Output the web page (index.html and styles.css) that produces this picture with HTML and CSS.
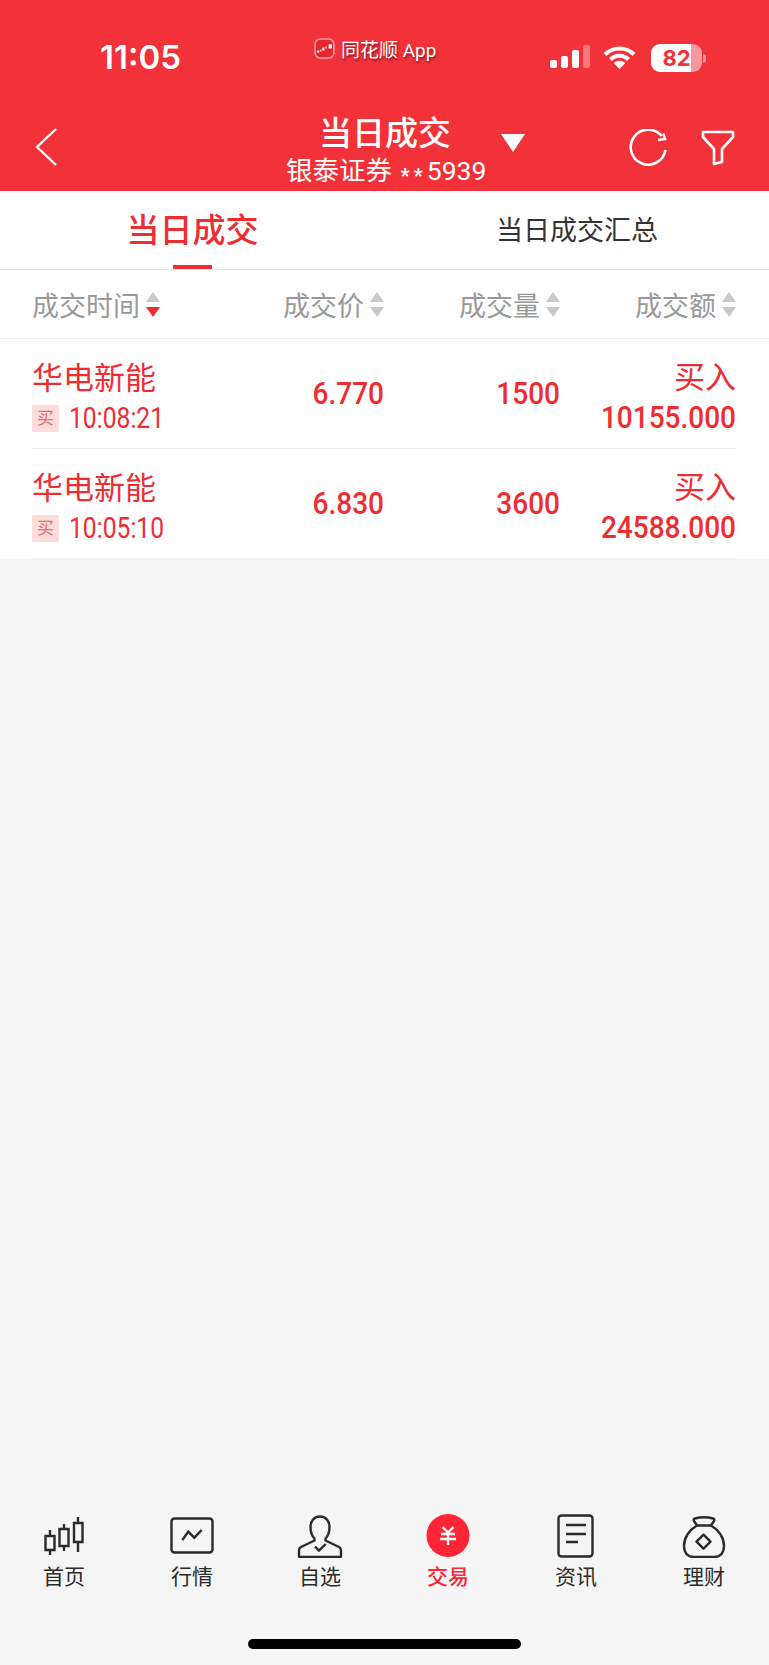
FILE: index.html
```html
<!DOCTYPE html>
<html>
  <head>
    <meta charset="utf-8" />
    <link rel="stylesheet" href="styles.css">
  </head>

  <body>
    <header class="header">
      <div class="status">
        <div class="clock">11:05</div>
        <div class="source">
          <svg class="source-logo" width="21" height="21" viewBox="0 0 20 20">
            <rect x="1" y="1" width="18" height="18" rx="5" fill="#e8242c" stroke="#f9a0a4" stroke-width="1.5"/>
            <path d="M3 12h2v2H3zM6 11h1v2H6zM8 9h2v3H8zM11 8h1v2h-1zM14 6h3v4h-3z" fill="#fff"/>
          </svg>
          <span>同花顺 App</span>
        </div>
        <div class="indicators">
          <div class="signal">
            <i class="bar bar-1"></i><i class="bar bar-2"></i><i class="bar bar-3"></i><i class="bar bar-4"></i>
          </div>
          <svg class="wifi" width="33" height="24" viewBox="0 0 33 24">
            <path d="M2 9.5C10 1.5 23 1.5 31 9.5M7.5 14.5C12.5 9.5 20.5 9.5 25.5 14.5" fill="none" stroke="#fff" stroke-width="4.2"/>
            <path d="M10.8 18.2C14 15 19 15 22.2 18.2L16.5 24Z" fill="#fff"/>
          </svg>
          <div class="battery">82</div>
          <i class="battery-nub"></i>
        </div>
      </div>

      <nav class="nav">
        <div class="nav-back">
          <svg width="24" height="40" viewBox="0 0 24 40">
            <path d="M22 2L3 20L22 38" fill="none" stroke="#fff" stroke-width="2.4"/>
          </svg>
        </div>
        <div class="nav-title">
          <div class="nav-name">当日成交</div>
          <div class="nav-account">银泰证券 <span class="mask">**</span><span class="tail">5939</span></div>
        </div>
        <div class="nav-actions">
          <i class="nav-caret"></i>
          <svg class="nav-reload" width="40" height="40" viewBox="0 0 40 40">
            <path d="M32.7 7A17.5 17.5 0 1 0 36.5 21" fill="none" stroke="#fff" stroke-width="2.6"/>
            <path d="M34.3 4.5L36 10L29 11" fill="none" stroke="#fff" stroke-width="2.4"/>
          </svg>
          <svg class="nav-filter" width="36" height="38" viewBox="0 0 36 38">
            <path d="M2 3H32V8L21 20V33L13 35V20L2 8Z" fill="none" stroke="#fff" stroke-width="2.6" stroke-linejoin="round"/>
          </svg>
        </div>
      </nav>
    </header>

    <div class="tabs">
      <div class="tab tab-active">当日成交</div>
      <div class="tab">当日成交汇总</div>
    </div>

    <div class="table-head">
      <div class="th th-first">成交时间<span class="sort"><i class="up"></i><i class="down down-on"></i></span></div>
      <div class="th">成交价<span class="sort"><i class="up"></i><i class="down"></i></span></div>
      <div class="th">成交量<span class="sort"><i class="up"></i><i class="down"></i></span></div>
      <div class="th">成交额<span class="sort"><i class="up"></i><i class="down"></i></span></div>
    </div>

    <div class="table-body">
      <div class="row">
        <div class="cell-stock">
          <div class="stock-name">华电新能</div>
          <div class="stock-time"><span class="tag">买</span><span class="time">10:08:21</span></div>
        </div>
        <div class="num">6.770</div>
        <div class="num">1500</div>
        <div class="cell-amount">
          <div class="direction">买入</div>
          <div class="num">10155.000</div>
        </div>
      </div>
      <div class="row">
        <div class="cell-stock">
          <div class="stock-name">华电新能</div>
          <div class="stock-time"><span class="tag">买</span><span class="time">10:05:10</span></div>
        </div>
        <div class="num">6.830</div>
        <div class="num">3600</div>
        <div class="cell-amount">
          <div class="direction">买入</div>
          <div class="num">24588.000</div>
        </div>
      </div>
    </div>

    <main class="blank"></main>

    <footer class="footer">
      <div class="tabbar">
        <div class="tabbar-item">
          <svg width="48" height="44" viewBox="0 0 48 44" fill="none" stroke="#2b2b2b" stroke-width="2.4">
            <path d="M5.5 22h9v14h-9zM10 16v6M10 36v5M19.5 15h9v17h-9zM24 10v5M24 32v5M34 9h8.5v19H34zM38 3v6M38 28v10"/>
          </svg>
          <span>首页</span>
        </div>
        <div class="tabbar-item">
          <svg width="48" height="44" viewBox="0 0 48 44" fill="none" stroke="#2b2b2b" stroke-width="2.4">
            <rect x="3.5" y="4.5" width="41" height="34" rx="3"/>
            <path d="M14.3 26L20.3 17.7L26.3 23.7L33.7 16"/>
          </svg>
          <span>行情</span>
        </div>
        <div class="tabbar-item">
          <svg width="48" height="44" viewBox="0 0 48 44" fill="none" stroke="#2b2b2b" stroke-width="2.4" stroke-linejoin="round">
            <path d="M18.5 24.5C15.5 21.5 14.5 18 14.5 13C14.5 6.5 18.5 2.5 24 2.5C29.5 2.5 33.5 6.5 33.5 13C33.5 18 32.5 21.5 29.5 24.5V26.5L43 33Q45 34 45 37V42Q45 43 44 43H4Q3 43 3 42V37Q3 34 5 33L18.5 26.5Z"/>
            <path d="M19 32.7L23 36.7L29.7 30"/>
          </svg>
          <span>自选</span>
        </div>
        <div class="tabbar-item tabbar-active">
          <svg width="48" height="44" viewBox="0 0 48 44" fill="none">
            <circle cx="24" cy="21.5" r="21.5" fill="#ff2436"/>
            <path d="M18.5 13L24 18.5L29.5 13M17 20H31M16 25H32M24 18.5V31" stroke="#fff" stroke-width="2.4"/>
          </svg>
          <span>交易</span>
        </div>
        <div class="tabbar-item">
          <svg width="48" height="44" viewBox="0 0 48 44" fill="none" stroke="#2b2b2b" stroke-width="2.4">
            <rect x="6.5" y="1.5" width="34" height="41" rx="3"/>
            <path d="M14 11H34M14 20H34M14 28H26"/>
          </svg>
          <span>资讯</span>
        </div>
        <div class="tabbar-item">
          <svg width="48" height="44" viewBox="0 0 48 44" fill="none" stroke="#2b2b2b" stroke-width="2.4" stroke-linejoin="round">
            <path d="M15 4.5Q24 2 33 4.5Q35 5 34 7L31 11.5H17L14 7Q13 5 15 4.5Z"/>
            <path d="M17 11.5C9 16 4 24 4 32C4 40 9 43 14 43H34C39 43 44 40 44 32C44 24 39 16 31 11.5"/>
            <path d="M23.5 20.7L30.5 27.7L23.5 34.7L16.5 27.7Z"/>
          </svg>
          <span>理财</span>
        </div>
      </div>
      <div class="home-bar"></div>
    </footer>
  </body>
</html>
```

FILE: styles.css
```css
html,
body {
  margin: 0;
  padding: 0;
}

body {
  display: flex;
  flex-direction: column;
  width: 769px;
  height: 1665px;
  overflow: hidden;
  background: #f5f5f5;
  font-family: "Roboto", "Noto Sans CJK SC", sans-serif;
}

i {
  display: block;
}

.header {
  height: 191px;
  background: #f23139;
  color: #fff;
}

.status {
  display: grid;
  grid-template-columns: 314px auto 1fr;
  height: 100px;
}
.clock {
  padding: 37px 0 0 100px;
  font-family: "Inter", sans-serif;
  font-size: 33px;
  line-height: 40px;
  font-weight: 600;
}
.source {
  display: flex;
  align-items: center;
  gap: 6px;
  height: 20px;
  margin-top: 38px;
  font-size: 19px;
  text-shadow: 1px 2px 2px rgba(90, 0, 0, 0.6);
}
.indicators {
  display: flex;
  align-items: flex-start;
  justify-content: flex-end;
  padding: 45px 63px 0 0;
}
.signal {
  display: flex;
  align-items: flex-end;
  gap: 4px;
  height: 23px;
}
.bar {
  width: 7px;
  border-radius: 2px;
  background: #fff;
}
.bar-1 {
  height: 8px;
}
.bar-2 {
  height: 12px;
}
.bar-3 {
  height: 18px;
}
.bar-4 {
  height: 23px;
  background: rgba(255, 255, 255, 0.35);
}
.wifi {
  margin-left: 13px;
}
.battery {
  width: 51px;
  height: 28px;
  margin: -1px 0 0 15px;
  border-radius: 9px;
  background: linear-gradient(to right, #fff 78%, rgba(255, 255, 255, 0.5) 78%);
  color: #f23139;
  font-family: "Inter", sans-serif;
  font-size: 22px;
  line-height: 28px;
  font-weight: 700;
  text-align: center;
}
.battery-nub {
  width: 3px;
  height: 9px;
  margin: 9px 0 0 1px;
  border-radius: 0 3px 3px 0;
  background: rgba(255, 255, 255, 0.5);
}

.nav {
  display: grid;
  grid-template-columns: 286px 198px 1fr;
  height: 91px;
}
.nav-back {
  padding: 27px 0 0 34px;
}
.nav-title {
  text-align: center;
}
.nav-name {
  padding-top: 15px;
  font-size: 33px;
  line-height: 38px;
  font-weight: 500;
}
.nav-account {
  margin-top: 2px;
  font-size: 26.5px;
  line-height: 32px;
  white-space: nowrap;
}
.mask {
  margin-left: 2px;
  font-size: 20px;
  font-weight: 700;
  letter-spacing: 4px;
  vertical-align: -3px;
}
.nav-actions {
  display: flex;
  align-items: flex-start;
  padding: 29px 0 0 17px;
}
.nav-caret {
  width: 0;
  height: 0;
  margin-top: 5px;
  border-left: 12px solid transparent;
  border-right: 12px solid transparent;
  border-top: 18px solid #fff;
}
.nav-reload {
  margin-left: 104px;
}
.nav-filter {
  margin-left: 32px;
}

.tabs {
  display: grid;
  grid-template-columns: 385px 384px;
  grid-template-rows: 78px;
  height: 78px;
  border-bottom: 1px solid #e6e6e6;
  background: #fff;
}
.tab {
  position: relative;
  text-align: center;
  font-size: 27px;
  line-height: 80px;
  color: #333;
}
.tab-active {
  font-size: 33px;
  font-weight: 500;
  color: #ee2d33;
}
.tab-active::after {
  content: "";
  position: absolute;
  left: 173px;
  bottom: 0;
  width: 39px;
  height: 4px;
  background: #ee2d33;
}

.table-head,
.row {
  display: grid;
  grid-template-columns: repeat(4, 1fr);
}
.table-head {
  height: 68px;
  padding: 0 33px 0 32px;
  border-bottom: 1px solid #ececec;
  background: #fff;
}
.th {
  display: flex;
  align-items: center;
  justify-content: flex-end;
  font-size: 27px;
  color: #999;
}
.th-first {
  justify-content: flex-start;
}
.sort {
  display: flex;
  flex-direction: column;
  gap: 5px;
  margin-left: 6px;
}
.up,
.down {
  width: 0;
  height: 0;
  border-left: 7px solid transparent;
  border-right: 7px solid transparent;
}
.up {
  border-bottom: 10px solid #c8c8c8;
}
.down {
  border-top: 10px solid #c8c8c8;
}
.down-on {
  border-top-color: #ee2d33;
}

.table-body {
  padding: 0 33px 0 32px;
  background: #fff;
}
.row {
  height: 109px;
  border-bottom: 1px solid #f0f0f0;
  color: #ee2d33;
}
.stock-name {
  padding-top: 19px;
  font-size: 31px;
  line-height: 41px;
}
.stock-time {
  display: flex;
  align-items: center;
  margin-top: 6px;
  line-height: 27px;
}
.time {
  font-size: 29px;
  transform: scaleX(0.85);
  transform-origin: left center;
  white-space: nowrap;
}
.tag {
  width: 27px;
  height: 27px;
  margin-right: 10px;
  border-radius: 2px;
  background: #fddcdc;
  color: #f06a6a;
  font-size: 17px;
  text-align: center;
}
.num {
  font-size: 32px;
  line-height: 108px;
  font-weight: 500;
  text-align: right;
  transform: scaleX(0.875);
  transform-origin: right center;
}
.cell-amount {
  text-align: right;
}
.direction {
  padding-top: 18px;
  font-size: 31px;
  line-height: 41px;
}
.cell-amount .num {
  line-height: 39px;
}

.blank {
  flex: 1;
}

.footer {
  height: 151px;
}
.tabbar {
  display: grid;
  grid-template-columns: repeat(6, 128px);
  height: 125px;
}
.tabbar-item {
  display: flex;
  flex-direction: column;
  align-items: center;
  gap: 6px;
  font-size: 21px;
  line-height: 26px;
  color: #2b2b2b;
}
.tabbar-active {
  color: #ff2436;
  font-weight: 500;
}
.home-bar {
  width: 273px;
  height: 10px;
  margin-left: 248px;
  border-radius: 5px;
  background: #000;
}
```
